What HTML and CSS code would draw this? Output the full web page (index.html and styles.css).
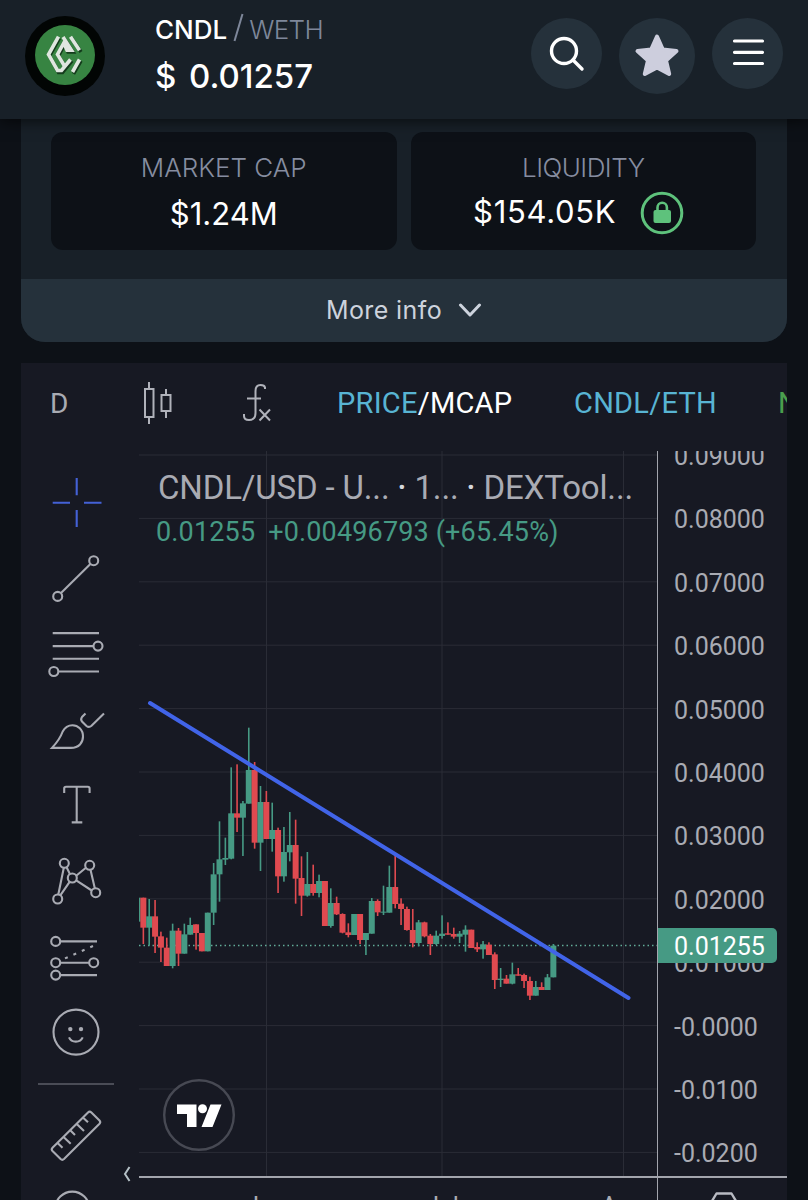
FILE: index.html
```html
<!DOCTYPE html>
<html lang="en">
<head>
  <meta charset="UTF-8">
  <title>CNDL / WETH</title>
  <link rel="stylesheet" href="styles.css">
</head>
<body>
  <!-- Header -->
  <header class="header">
    <svg class="logo" width="80" height="80" viewBox="0 0 80 80">
      <circle cx="40" cy="40" r="40" fill="#020504"/>
      <circle cx="40" cy="39" r="30" fill="#378442"/>
      <g fill="none" stroke="#143c1c" stroke-width="3.600" transform="translate(1 1.4)">
        <path d="M33.500 20.700L23.500 38.500L32.500 55H36.500L46 43.500M38 21L47 34.500H42L38.500 27L32.500 38.500L39.500 50M45.500 20.700L55 34.500M55 43.500L47.500 56.500"/>
      </g>
      <g fill="none" stroke="#dfe6df" stroke-width="3.600">
        <path d="M33.500 20.700L23.500 38.500L32.500 54.500H36.500L45.500 43.500"/>
        <path d="M38 21L46.500 34.200H42L38.800 27L32.500 38.500L39.500 50"/>
        <path d="M45.500 20.700L54.500 34.200M54.500 43.500L47.500 56"/>
      </g>
    </svg>
    <div class="pair">
      <div class="pair-name"><b>CNDL</b><svg width="11" height="30" viewBox="0 0 11 30"><path d="M1.500 28L9.500 1" stroke="#7e879a" stroke-width="2"/></svg><span>WETH</span></div>
      <div class="pair-price"><span class="dollar">$</span><span>0.01257</span></div>
    </div>
    <div class="actions">
      <button class="round">
        <svg width="72" height="72" viewBox="0 0 72 72" fill="none" stroke="#fff" stroke-width="3.400" stroke-linecap="round">
          <circle cx="33" cy="33" r="12.500"/>
          <path d="M42 42L51 51"/>
        </svg>
      </button>
      <button class="round round-star">
        <svg width="76" height="76" viewBox="0 0 76 76">
          <path d="M38 18.500L43.800 31.500L57.500 33L47 42.500L50.200 56L38 49.500L25.800 56L29 42.500L18.500 33L32.200 31.500Z" fill="#cdcedd" stroke="#cdcedd" stroke-width="4" stroke-linejoin="round"/>
        </svg>
      </button>
      <button class="round">
        <svg width="72" height="72" viewBox="0 0 72 72" fill="none" stroke="#fff" stroke-width="3.200" stroke-linecap="round">
          <path d="M22.500 23h28M22.500 34.300h28M22.500 45.500h28"/>
        </svg>
      </button>
    </div>
  </header>

  <!-- Token info -->
  <section class="info">
    <div class="stats">
      <div class="stat">
        <div class="stat-label">MARKET CAP</div>
        <div class="stat-value">$1.24M</div>
      </div>
      <div class="stat">
        <div class="stat-label liq-label">LIQUIDITY</div>
        <div class="stat-value liq">
          <span>$154.05K</span>
          <svg width="44" height="44" viewBox="0 0 44 44">
            <circle cx="22" cy="22" r="19.800" fill="none" stroke="#5ec27c" stroke-width="3"/>
            <rect x="13.500" y="19" width="17.500" height="13" rx="2" fill="#5ec27c"/>
            <path d="M17.500 20v-3.500a4.700 4.700 0 0 1 9.400 0V20" fill="none" stroke="#5ec27c" stroke-width="2.600"/>
          </svg>
        </div>
      </div>
    </div>
    <div class="more">
      <span>More info</span>
      <svg width="24" height="14" viewBox="0 0 24 14" fill="none" stroke="#cdd3dd" stroke-width="3" stroke-linecap="round" stroke-linejoin="round">
        <path d="M2.500 2L12 12L21.500 2"/>
      </svg>
    </div>
  </section>

  <!-- Chart widget -->
  <section class="chart">
    <div class="toolbar">
      <span class="interval">D</span>
      <svg class="candles-icon" width="32" height="44" viewBox="0 0 32 44" fill="none" stroke="#b0b2ba" stroke-width="2">
        <path d="M7 1v7M7 36v7M24 8v6M24 30v7"/>
        <rect x="3" y="8" width="8.500" height="28"/>
        <rect x="19.500" y="14" width="9" height="16"/>
      </svg>
      <svg class="fx-icon" width="30" height="40" viewBox="0 0 30 40" fill="none" stroke="#b0b2ba" stroke-width="2">
        <path d="M23 6V4.500Q22.500 2 18.500 2Q13.500 2 13.500 8V30Q13.500 37 7 37Q2 37 2 33V31"/>
        <path d="M5 15.500H19M17.500 26.500L28 37.500M28 26.500L17.500 37.500"/>
      </svg>
      <span class="price-mcap"><em>PRICE</em>/MCAP</span>
      <span class="pair-link">CNDL/ETH</span>
      <span class="mode">N</span>
    </div>

    <div class="chart-body">
      <div class="tools">
        <svg class="tool active" viewBox="0 0 60 60"><path d="M6.700 29.700H24M38 29.700H55.500M30.700 5V22.300M30.700 37V54"/></svg>
        <svg class="tool" viewBox="0 0 60 60"><circle cx="47.700" cy="11.700" r="4.500"/><circle cx="11.700" cy="47.400" r="4.500"/><path d="M15 44.100L44.400 15"/></svg>
        <svg class="tool" viewBox="0 0 60 60"><path d="M6.700 9.100H53M6.700 22.100H47.500M6.700 34.800H53M12 47.500H53"/><circle cx="52" cy="22.100" r="4.500"/><circle cx="7.800" cy="47.500" r="4.500"/></svg>
        <svg class="tool" viewBox="0 0 60 60"><path d="M6 47.900H25C33 47.900 37 42.500 37 36.500C37 29.500 32 25.200 26.500 25.200C21 25.200 18.500 28 16.700 31.500C14.500 37.500 11.500 42 6 47.900Z"/><path d="M39.500 13.500L36 17Q34.300 19.300 36 21.500L40.500 26Q43 28 45.500 25.800L58 13.500"/></svg>
        <svg class="tool" viewBox="0 0 60 60"><path d="M18.200 18V13.500Q18.200 11.800 20 11.800H41.800Q43.600 11.800 43.600 13.500V18M30.700 11.800V47.400M25.700 47.400H36.300"/></svg>
        <svg class="tool" viewBox="0 0 60 60"><path d="M17.800 16.800L12.300 43.500M14.300 44.300L23.800 30.700M20.600 16.200L24 23.200M30.200 24.700L39.900 16.700M44.500 18.700L48.800 37.200M30.200 29.300L45.700 39.500"/><circle cx="18.300" cy="12.300" r="4.500"/><circle cx="43.700" cy="14.300" r="4.500"/><circle cx="26.300" cy="27" r="4.500"/><circle cx="49.700" cy="41.700" r="4.500"/><circle cx="11.700" cy="48" r="4.500"/></svg>
        <svg class="tool" viewBox="0 0 60 60"><path d="M14.500 14.400H51M14.500 35.700H43M14.500 48.100H51"/><path d="M19 31.400L47 19" stroke-dasharray="3 6.200"/><circle cx="9.700" cy="14.400" r="4.500"/><circle cx="9.700" cy="35.700" r="4.500"/><circle cx="47.700" cy="35.700" r="4.500"/><circle cx="9.700" cy="48.100" r="4.500"/></svg>
        <svg class="tool" viewBox="0 0 60 60"><circle cx="30" cy="30.100" r="22.500"/><path d="M23 35.300C25.500 41 34.200 41 36.700 35.300"/><g class="eyes"><circle cx="24.300" cy="27.100" r="2.200"/><circle cx="35" cy="27.100" r="2.200"/></g></svg>
        <div class="tools-line"></div>
        <svg class="tool" viewBox="0 0 60 60"><path d="M42 6.500Q43.700 4.800 45.400 6.500L53.500 14.500Q55 16.200 53.500 17.800L18 53Q16.300 54.600 14.600 53L6.500 45Q4.900 43.300 6.500 41.700ZM11.300 36.700L16.500 41.700M17.300 30.700L24.700 37.700M24 24L29 29M30.500 17.700L38 24.900M36.900 11.500L42 16.300"/></svg>
        <svg class="tool" viewBox="0 0 60 60"><circle cx="26.300" cy="26.600" r="17"/></svg>
        <svg class="collapse" width="8" height="16" viewBox="0 0 8 16"><path d="M6.500 1L2 8L6.500 15"/></svg>
      </div>

      <div class="pane">
        <svg class="plot" id="plot" width="518" height="725" viewBox="139 451 518 725"></svg>
        <div class="legend">
          <div class="legend-title"><span>CNDL/USD - U...</span><b>·</b><span>1...</span><b>·</b><span>DEXTool...</span></div>
          <div class="legend-values"><span>0.01255</span><span>+0.00496793 (+65.45%)</span></div>
        </div>
        <svg class="tv" width="72" height="72" viewBox="0 0 72 72">
          <circle cx="36" cy="36" r="34.800" fill="#171923" stroke="#474953" stroke-width="2.400"/>
          <path d="M14 25.500H33.500V48H24V35H14ZM47.500 25.500H58.500L49.500 48H38.500Z" fill="#fff"/>
          <circle cx="39.500" cy="29.800" r="4.500" fill="#fff"/>
        </svg>
      </div>

      <div class="axis">
        <div class="prices">
          <span>0.09000</span>
          <span>0.08000</span>
          <span>0.07000</span>
          <span>0.06000</span>
          <span>0.05000</span>
          <span>0.04000</span>
          <span>0.03000</span>
          <span>0.02000</span>
          <span>0.01000</span>
          <span>-0.0000</span>
          <span>-0.0100</span>
          <span>-0.0200</span>
        </div>
        <div class="last">0.01255</div>
      </div>

      <div class="times">
        <span class="month">Jun</span>
        <span class="month">Jul</span>
        <span class="month">Aug</span>
      </div>
      <div class="settings">
        <svg width="32" height="30" viewBox="0 0 32 30" fill="none" stroke="#b9bbc3" stroke-width="2.400" stroke-linejoin="round">
          <path d="M8.500 1.500H23.500L31 14L23.500 27H8.500L1 14Z"/>
        </svg>
      </div>
    </div>
  </section>

  <script>
    // [color, body top, body bottom, wick top, wick bottom], in thirds of a pixel
    const groups = [
      { base: 2040, candles: [
        ['g',653,725,653,725], ['r',653,743,653,792], ['g',709,743,657,797], ['r',709,770,660,819],
        ['r',769,803,755,846], ['r',803,858,773,858], ['g',752,858,731,865], ['r',752,821,744,858],
        ['g',763,821,731,821], ['g',735,764,713,764], ['r',733,759,733,809], ['r',759,814,759,814],
        ['g',698,814,698,814], ['g',583,698,549,735], ['g',538,583,424,665], ['g',534,539,473,555],
        ['g',400,536,262,538], ['r',400,413,253,456], ['g',370,413,363,528], ['g',270,371,143,371],
        ['r',270,488,246,506], ['g',366,488,318,573], ['r',366,477,333,477], ['g',450,477,368,515]
      ] },
      { base: 2340, candles: [
        ['r',150,289,143,339], ['g',216,289,141,305], ['g',195,217,96,244], ['r',195,296,119,371],
        ['r',294,347,229,408], ['g',312,347,216,350], ['r',312,339,254,347], ['g',303,339,284,352],
        ['r',303,438,303,438], ['g',369,438,325,443], ['r',369,403,350,405], ['r',402,458,400,460],
        ['r',457,465,430,472], ['g',402,465,402,465], ['r',402,480,402,492], ['g',459,480,459,525],
        ['g',363,461,354,461], ['r',363,397,358,408], ['g',395,398,317,405], ['g',321,398,257,398],
        ['r',321,372,226,385], ['r',371,387,355,435], ['r',387,450,380,452], ['r',450,489,387,502],
        ['g',427,489,420,499], ['r',427,469,425,472], ['r',467,492,462,525]
      ] },
      { base: 2670, candles: [
        ['g',137,162,122,165], ['g',131,138,76,146], ['r',130,134,97,134], ['r',132,140,113,146],
        ['g',131,140,123,159], ['g',119,134,106,185], ['r',119,174,119,174], ['r',171,178,157,186],
        ['g',163,178,153,206], ['r',164,195,157,195], ['r',193,270,187,297], ['g',266,270,234,291],
        ['r',266,281,255,281], ['g',253,281,218,283], ['r',253,257,234,257], ['r',255,273,251,294],
        ['r',273,317,260,330], ['g',291,317,273,317], ['r',291,300,277,300], ['g',262,300,252,300],
        ['g',167,262,162,262]
      ] }
    ];
    const colors = { g: '#469a84', r: '#e04a50' };
    let svg = '';

    // grid
    for (let i = 0; i < 12; i++) {
      svg += `<path class="grid" d="M139 ${455 + i * 63.4}H657"/>`;
    }
    [266.5, 442, 623.5].forEach(x => {
      svg += `<path class="grid" d="M${x} 451V1176"/>`;
    });

    svg += '<path class="last-line" d="M139 945.500H657"/>';

    // candles
    let x = 137.5;
    groups.forEach(group => {
      group.candles.forEach(([c, top, bottom, high, low]) => {
        const y = v => (group.base + v) / 3;
        svg += `<rect x="${x - 0.8}" y="${y(high)}" width="1.6" height="${y(low) - y(high)}" fill="${colors[c]}"/>`;
        svg += `<rect x="${x - 3}" y="${y(top)}" width="6" height="${y(bottom) - y(top)}" fill="${colors[c]}"/>`;
        x += 5.857;
      });
    });

    svg += '<path class="trend" d="M150 703L628.500 998"/>';
    document.getElementById('plot').innerHTML = svg;
  </script>
</body>
</html>
```
FILE: styles.css
```css
* {
  box-sizing: border-box;
}

body {
  margin: 0;
  width: 808px;
  height: 1200px;
  overflow: hidden;
  background: #0d1117;
  font-family: Inter, "Open Sans", sans-serif;
  color: #fff;
}

svg {
  display: block;
  flex: none;
}

/* Header */
.header {
  position: relative;
  display: flex;
  height: 119px;
  padding: 16px 25px 0 25px;
  background: #182028;
  box-shadow: 0 2px 14px rgba(0, 0, 0, 0.65);
}

.pair {
  margin-left: 50px;
  white-space: nowrap;
}

.pair-name {
  display: flex;
  height: 28px;
  line-height: 28px;
  font-size: 26px;
  color: #7e879a;
}

.pair-name b {
  font-weight: 500;
  color: #fff;
}

.pair-name svg {
  margin: -3px 5px 0 6px;
}

.pair-name span {
  font-weight: 300;
  letter-spacing: -0.6px;
}

.pair-price {
  display: flex;
  height: 44px;
  margin-top: 10px;
  line-height: 44px;
  font-size: 33px;
  font-weight: 500;
}

.dollar {
  width: 34px;
}

.actions {
  display: flex;
  align-items: flex-start;
  gap: 17px;
  margin-left: auto;
  padding-top: 2px;
}

.round {
  width: 71px;
  height: 71px;
  padding: 0;
  border: none;
  border-radius: 50%;
  background: #25313b;
}

.round-star {
  width: 76px;
  height: 76px;
}

/* Token info */
.info {
  width: 766px;
  height: 223px;
  margin-left: 21px;
  padding-top: 13px;
  background: #182028;
  border-radius: 0 0 24px 24px;
  overflow: hidden;
}

.stats {
  display: flex;
  gap: 14px;
  padding: 0 31px 0 30px;
}

.stat {
  flex: 1;
  height: 118px;
  padding-top: 18px;
  border-radius: 12px;
  background: #0d1117;
  text-align: center;
}

.stat-label {
  height: 36px;
  line-height: 36px;
  font-size: 26px;
  font-weight: 300;
  color: #868da0;
}

.liq-label {
  letter-spacing: -0.5px;
}

.stat-value {
  height: 48px;
  margin-top: 4px;
  line-height: 48px;
  font-size: 31px;
}

.liq {
  display: flex;
  justify-content: center;
  gap: 24px;
  padding-right: 9px;
  line-height: 44px;
}

.liq span {
  letter-spacing: 0.7px;
}

.liq svg {
  margin-top: 1px;
}

.more {
  display: flex;
  align-items: center;
  justify-content: center;
  gap: 16px;
  height: 63px;
  margin-top: 29px;
  padding-bottom: 2px;
  background: #25313b;
  font-size: 25px;
  letter-spacing: 0.4px;
  color: #cdd3dd;
}

/* Chart */
.chart {
  width: 766px;
  height: 837px;
  margin: 21px 0 0 21px;
  overflow: hidden;
  background: #171923;
  font-family: Roboto, sans-serif;
  color: #a9abb3;
}

.toolbar {
  display: flex;
  align-items: center;
  height: 80px;
  margin-bottom: 8px;
  padding-left: 29px;
  font-size: 29px;
  letter-spacing: 0.25px;
  white-space: nowrap;
}

.toolbar span {
  flex: none;
}

.interval {
  width: 92px;
  font-size: 28px;
}

.fx-icon {
  margin-left: 68px;
}

.price-mcap {
  width: 237px;
  margin-left: 65px;
  color: #fff;
}

.price-mcap em {
  font-style: normal;
  color: #58b4d3;
}

.pair-link {
  width: 204px;
  color: #58b4d3;
}

.mode {
  color: #4a9e4e;
}

.chart-body {
  display: grid;
  grid-template-columns: 118px 518px 130px;
  grid-template-rows: 725px 24px;
}

.tools {
  position: relative;
  grid-row: 1 / 3;
  display: flex;
  flex-direction: column;
  gap: 15.6px;
  padding: 22px 0 0 25px;
  overflow: hidden;
}

.tool {
  width: 60px;
  height: 60px;
  fill: none;
  stroke: #a9abb3;
  stroke-width: 2.1;
}

.active {
  stroke: #4461d6;
}

.eyes {
  fill: #a9abb3;
  stroke: none;
}

.tools-line {
  width: 76px;
  height: 2px;
  margin: 5px 0 6px -8px;
  flex: none;
  background: #4a4c56;
}

.collapse {
  position: absolute;
  left: 102px;
  top: 715px;
  fill: none;
  stroke: #b5c0c6;
  stroke-width: 2;
}

.pane {
  position: relative;
  overflow: hidden;
}

.grid {
  stroke: #2a2c36;
  stroke-width: 1;
}

.last-line {
  stroke: #62ab98;
  stroke-width: 1.3;
  stroke-dasharray: 1.5 3;
}

.trend {
  stroke: #4164e8;
  stroke-width: 4;
  stroke-linecap: round;
}

.legend {
  position: absolute;
  left: 16px;
  top: 17px;
  white-space: nowrap;
}

.legend-title {
  display: flex;
  height: 40px;
  padding-left: 3px;
  line-height: 40px;
  font-size: 33px;
}

.legend-title b {
  width: 25px;
  text-align: center;
  font-weight: 500;
  color: #d5d7dc;
}

.legend-title span {
  letter-spacing: -0.15px;
}

.legend-values {
  display: flex;
  gap: 13px;
  height: 34px;
  margin-top: 7px;
  padding-left: 1px;
  line-height: 34px;
  font-size: 27px;
  letter-spacing: 0.15px;
  color: #469a84;
}

.tv {
  position: absolute;
  left: 24px;
  top: 628px;
}

.axis {
  position: relative;
  border-left: 1.5px solid #a3a5ad;
  overflow: hidden;
}

.prices {
  display: flex;
  flex-direction: column;
  margin-top: -26px;
  padding-left: 16px;
  font-size: 25px;
}

.prices span {
  height: 63.4px;
  line-height: 63.4px;
}

.last {
  position: absolute;
  left: -1px;
  top: 477px;
  width: 120px;
  height: 35px;
  padding-left: 17px;
  border-radius: 0 5px 5px 0;
  background: #469a84;
  line-height: 37px;
  font-size: 25px;
  color: #fff;
}

.times {
  display: flex;
  border-top: 2px solid #a3a5ad;
  padding-top: 14px;
  font-size: 25px;
  line-height: 30px;
  overflow: hidden;
}

.month {
  width: 60px;
  margin-left: 97px;
  text-align: center;
}

.month + .month {
  margin-left: 116px;
}

.month + .month + .month {
  margin-left: 121px;
}

.settings {
  border-top: 2px solid #a3a5ad;
  border-left: 1.5px solid #a3a5ad;
  padding: 14px 0 0 50px;
  overflow: hidden;
}
```
